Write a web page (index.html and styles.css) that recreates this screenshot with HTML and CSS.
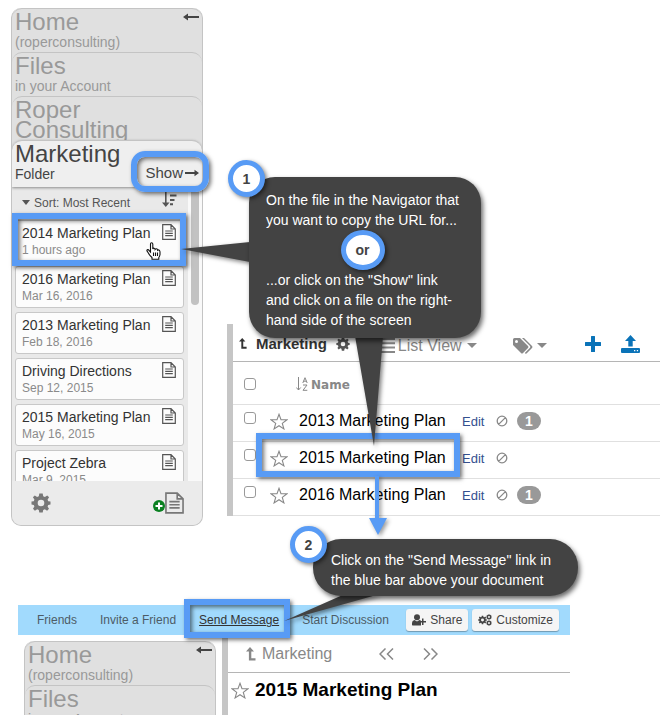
FILE: index.html
```html
<!DOCTYPE html>
<html lang="en">
<head>
<meta charset="utf-8">
<title>Copy a file URL and send a message</title>
<link rel="stylesheet" href="styles.css">
</head>
<body>
<svg class="defs" aria-hidden="true">
  <symbol id="i-back" viewBox="0 0 16 8"><path d="M0 4 5 .4V3H16V5H5V7.600Z"/></symbol>
  <symbol id="i-next" viewBox="0 0 14 8"><path d="M14 4 9.500.8V3H0V5H9.500V7.200Z"/></symbol>
  <symbol id="i-doc" viewBox="0 0 14 16"><path fill="none" stroke="currentColor" stroke-width="1.200" d="M.7.700H9L13.300 5V15.300H.7ZM9 .7V5H13.300M3.200 7H10.800M3.200 9.300H10.800M3.200 11.600H10.800"/></symbol>
  <symbol id="i-gear" viewBox="0 0 20 20"><path fill-rule="evenodd" d="M8.300.5H11.700L12.200 3.300 13.900 4 16.200 2.400 18.100 4.300 16.600 6.600 17.200 8.200 19.500 8.600V11.400L17.200 11.900 16.600 13.500 18 15.800 16.100 17.700 13.800 16.200 12.200 16.900 11.700 19.500H8.300L7.800 16.900 6.200 16.200 3.900 17.700 2 15.800 3.400 13.500 2.800 11.900.5 11.400V8.600L2.800 8.200 3.400 6.600 1.900 4.300 3.800 2.400 6.100 4 7.800 3.300ZM10 6.700A3.300 3.300 0 1 0 10 13.300 3.300 3.300 0 1 0 10 6.700Z"/></symbol>
  <symbol id="i-up" viewBox="0 0 10 14"><path d="M4 0 8 4.600H5.300V11.200H9.500V13.500H2.900V4.600H0Z"/></symbol>
  <symbol id="i-star" viewBox="0 0 18 17"><path fill="none" stroke="currentColor" stroke-width="1.100" stroke-linejoin="miter" d="M9 1.300 11 6.600 16.900 6.800 12.300 10.400 13.900 15.900 9 12.700 4.100 15.900 5.700 10.400 1.100 6.800 7 6.600Z"/></symbol>
  <symbol id="i-none" viewBox="0 0 12 12"><path fill="none" stroke="currentColor" stroke-width="1.300" d="M6 1.200A4.800 4.800 0 1 0 6 10.800 4.800 4.800 0 1 0 6 1.200ZM2.600 9.400 9.400 2.600"/></symbol>
</svg>

<main class="page">
  <section class="browse">
    <nav class="navigator" aria-label="Navigator">
      <div class="tab"><h2>Home</h2><p>(roperconsulting)</p>
        <button class="back" aria-label="Hide navigator"><svg width="16" height="8"><use href="#i-back"/></svg></button></div>
      <div class="tab"><h2>Files</h2><p>in your Account</p></div>
      <div class="tab"><h2>Roper Consulting</h2></div>
      <div class="tab current"><h2>Marketing</h2><p>Folder</p>
        <a class="show" href="#show">Show <svg width="14" height="8"><use href="#i-next"/></svg></a></div>
      <div class="scroller">
        <div class="list">
          <button class="sort"><span class="caret"></span>Sort: Most Recent
            <svg class="sort-icon" width="16" height="17" viewBox="0 0 16 17"><path d="M3 0H4.600V12.500H7.500L3.800 17 0 12.500H3ZM8 0H16V2H8ZM8 4.500H14.500V6.500H8ZM8 9H12.500V11H8ZM8 13.200H11V15.200H8Z"/></svg></button>
          <a class="card" href="#f1"><span class="info"><b>2014 Marketing Plan</b><small>1 hours ago</small></span><svg width="14" height="16"><use href="#i-doc"/></svg></a>
          <a class="card" href="#f2"><span class="info"><b>2016 Marketing Plan</b><small>Mar 16, 2016</small></span><svg width="14" height="16"><use href="#i-doc"/></svg></a>
          <a class="card" href="#f3"><span class="info"><b>2013 Marketing Plan</b><small>Feb 18, 2016</small></span><svg width="14" height="16"><use href="#i-doc"/></svg></a>
          <a class="card" href="#f4"><span class="info"><b>Driving Directions</b><small>Sep 12, 2015</small></span><svg width="14" height="16"><use href="#i-doc"/></svg></a>
          <a class="card" href="#f5"><span class="info"><b>2015 Marketing Plan</b><small>May 16, 2015</small></span><svg width="14" height="16"><use href="#i-doc"/></svg></a>
          <a class="card" href="#f6"><span class="info"><b>Project Zebra</b><small>Mar 9, 2015</small></span><svg width="14" height="16"><use href="#i-doc"/></svg></a>
        </div>
        <div class="track"><div class="thumb"></div></div>
      </div>
      <div class="nav-foot">
        <button aria-label="Settings"><svg width="20" height="20"><use href="#i-gear"/></svg></button>
        <button class="add" aria-label="New document"><svg class="plus" width="12" height="12" viewBox="0 0 12 12"><circle cx="6" cy="6" r="6" fill="#0a8021"/><path d="M5 2.500H7V5H9.500V7H7V9.500H5V7H2.500V5H5Z" fill="#fff"/></svg><svg width="19" height="22"><use href="#i-doc"/></svg></button>
      </div>
    </nav>

    <section class="files">
      <header class="toolbar">
        <svg class="up" width="8" height="13"><use href="#i-up"/></svg>
        <h1>Marketing</h1>
        <button class="gear" aria-label="Folder settings"><svg width="14" height="14"><use href="#i-gear"/></svg></button>
        <button class="view"><svg width="16" height="15" viewBox="0 0 16 15"><path d="M0 0H16V2H0ZM0 4.300H16V6.300H0ZM0 8.600H16V10.600H0ZM0 12.900H16V14.900H0Z"/></svg>List View<span class="caret"></span></button>
        <button class="tags" aria-label="Tags"><svg width="20" height="16" viewBox="0 0 20 16"><path fill-rule="evenodd" d="M0 1.500Q0 0 1.500 0H7L15 8Q16 9 15 10L10 15Q9 16 8 15L0 7ZM3.500 2A1.500 1.500 0 1 0 3.500 5 1.500 1.500 0 1 0 3.500 2ZM9 0H11L19 8Q20 9 19 10L13.500 15.500Q12.500 16 11.800 15L17 9.800Q17.800 9 17 8Z"/></svg><span class="caret"></span></button>
        <button class="new" aria-label="Add"><svg width="16" height="16" viewBox="0 0 16 16"><path d="M6.500 0H9.500Q10 0 10 .5V6H15.500Q16 6 16 6.500V9.500Q16 10 15.500 10H10V15.500Q10 16 9.500 16H6.500Q6 16 6 15.500V10H.5Q0 10 0 9.500V6.500Q0 6 .5 6H6V.5Q6 0 6.500 0Z"/></svg></button>
        <button class="upload" aria-label="Upload"><svg width="19" height="18" viewBox="0 0 19 18"><path fill-rule="evenodd" d="M9.500 0 15 6H11.700V11.500H7.300V6H4ZM1 13H18Q19 13 19 14V17Q19 18 18 18H1Q0 18 0 17V14Q0 13 1 13ZM13 15V16.200H14.300V15ZM15.800 15V16.200H17.100V15Z"/></svg></button>
      </header>
      <table>
        <thead>
          <tr><th class="c-check"><input type="checkbox" aria-label="Select all"></th><th class="c-star"></th>
          <th class="c-name" colspan="2"><div class="sort-name"><svg width="12" height="14" viewBox="0 0 12 14"><path fill="none" stroke="currentColor" d="M2.500 0V13M.3 10.500 2.500 13 4.700 10.500M6.800 6 9 .7 11.200 6M7.600 4.200H10.400M7 8H11L7 13.300H11.300"/></svg>Name</div></th></tr>
        </thead>
        <tbody>
          <tr><td class="c-check"><input type="checkbox" aria-label="Select 2013 Marketing Plan"></td><td class="c-star"><svg width="18" height="17"><use href="#i-star"/></svg></td><td class="c-file">2013 Marketing Plan</td><td><div class="acts"><a href="#e1">Edit</a><svg width="12" height="12"><use href="#i-none"/></svg><span class="badge">1</span></div></td></tr>
          <tr><td class="c-check"><input type="checkbox" aria-label="Select 2015 Marketing Plan"></td><td class="c-star"><svg width="18" height="17"><use href="#i-star"/></svg></td><td class="c-file">2015 Marketing Plan</td><td><div class="acts"><a href="#e2">Edit</a><svg width="12" height="12"><use href="#i-none"/></svg></div></td></tr>
          <tr><td class="c-check"><input type="checkbox" aria-label="Select 2016 Marketing Plan"></td><td class="c-star"><svg width="18" height="17"><use href="#i-star"/></svg></td><td class="c-file">2016 Marketing Plan</td><td><div class="acts"><a href="#e3">Edit</a><svg width="12" height="12"><use href="#i-none"/></svg><span class="badge">1</span></div></td></tr>
        </tbody>
      </table>
    </section>
  </section>

  <section class="document">
    <nav class="bluebar" aria-label="Document actions">
      <a href="#friends">Friends</a>
      <a href="#invite">Invite a Friend</a>
      <a class="send" href="#send">Send Message</a>
      <a href="#discuss">Start Discussion</a>
      <button class="share"><svg width="14" height="12" viewBox="0 0 14 12" fill="#777"><circle cx="5" cy="3.200" r="3"/><path d="M0 11V9Q0 6.500 2.500 6L5 7.500 7.500 6Q8.500 6.200 9 7V11.500H.5ZM10 4.500H11.500V7H14V8.500H11.500V11H10V8.500H8V7H10Z"/></svg>Share</button>
      <button class="custom"><svg width="14" height="12" viewBox="0 0 14 12" fill="#444"><svg y="1" width="9" height="10"><use href="#i-gear"/></svg><svg x="8" width="6" height="6"><use href="#i-gear"/></svg><svg x="8" y="6" width="6" height="6"><use href="#i-gear"/></svg></svg>Customize</button>
    </nav>
    <div class="doc-body">
      <div class="navigator">
        <div class="tab"><h2>Home</h2><p>(roperconsulting)</p>
          <button class="back" aria-label="Hide navigator"><svg width="16" height="8"><use href="#i-back"/></svg></button></div>
        <div class="tab"><h2>Files</h2><p>in your Account</p></div>
      </div>
      <article class="doc">
        <header class="crumbs"><svg width="10" height="14"><use href="#i-up"/></svg><span>Marketing</span>
          <button class="prev" aria-label="Previous"><svg width="15" height="12" viewBox="0 0 15 12"><path d="M6.500.5 1 6 6.500 11.500M14 .5 8.500 6 14 11.500"/></svg></button>
          <button class="following" aria-label="Next"><svg width="15" height="12" viewBox="0 0 15 12"><path d="M1 .5 6.500 6 1 11.500M8.500.5 14 6 8.500 11.500"/></svg></button></header>
        <h1><svg width="18" height="17"><use href="#i-star"/></svg>2015 Marketing Plan</h1>
      </article>
    </div>
  </section>

  <div class="frame show-frame"></div>
  <div class="frame card-frame"></div>
  <div class="frame row-frame"></div>
  <div class="frame send-frame"></div>
  <svg class="pointers" width="660" height="725" aria-hidden="true">
    <path fill="#434343" d="M181 249 250 242V262ZM355 336H383L374 446ZM284 621 345 594H380Q330 608 284 621Z"/>
  </svg>
  <svg class="arrow" width="20" height="60" viewBox="0 0 20 60" aria-hidden="true"><path fill="#589bf5" d="M7 0H11V42H19L10 59 1 42H7Z"/></svg>
  <svg class="hand" width="15" height="18" viewBox="0 0 15 18" aria-hidden="true"><path fill="#fff" stroke="#111" stroke-width="1.100" d="M4.500 10V2Q4.500.7 5.600.7T6.800 2V7Q7.200 5.900 8.200 6.200 9 6.300 9.100 7.500 10 6.400 11 7 11.600 7.400 11.600 8.200 12.600 7.600 13.400 8.300 14 8.900 14 10V12.500Q13.800 14.300 12.800 15.500V17.300H6V15.500Q3.500 13.300 2.500 11.200L.9 8.800Q.9 7.200 2.500 7.800ZM7.500 10.500V14M9.500 10.500V14M11.500 10.500V14"/></svg>

  <aside class="callout first">
    <span class="dot step">1</span>
    <p>On the file in the Navigator that<br>you want to copy the URL for...</p>
    <span class="dot or">or</span>
    <p>...or click on the "Show" link<br>and click on a file on the right-<br>hand side of the screen</p>
  </aside>
  <aside class="callout second">
    <span class="dot step">2</span>
    <p>Click on the "Send Message" link in<br>the blue bar above your document</p>
  </aside>
</main>
</body>
</html>
```
FILE: styles.css
```css
* { box-sizing: border-box; }

body {
  margin: 0;
  background: #fff;
  color: #333;
  font-family: "Liberation Sans", Arial, sans-serif;
  font-size: 14px;
}

h1, h2, p { margin: 0; font-weight: normal; }
a { color: inherit; text-decoration: none; }
svg { display: block; flex: none; fill: currentColor; }
button {
  display: flex;
  align-items: center;
  padding: 0;
  border: 0;
  background: none;
  color: inherit;
  font: inherit;
}
.defs { position: absolute; width: 0; height: 0; }
.page { position: relative; overflow: hidden; }

.browse {
  display: flex;
  align-items: flex-end;
  gap: 24px;
  padding: 8px 0 0 11px;
}

/* Navigator */
.navigator {
  isolation: isolate;
  flex: none;
  width: 192px;
  overflow: hidden;
  border: 1px solid #c4c4c4;
  border-top: 0;
  border-radius: 10px;
  background: #e0e0e0;
}
.tab {
  position: relative;
  height: 44px;
  padding: 3px 3px 0;
  overflow: hidden;
  border-top: 1px solid #c4c4c4;
  border-radius: 10px 10px 0 0;
  background: #e0e0e0;
  color: #999;
}
.tab h2 { font-size: 24px; line-height: 20px; }
.tab p { line-height: 20px; }
.tab.current {
  z-index: 1;
  height: 47px;
  background: #efefef;
  color: #444;
  box-shadow: 0 1px 3px rgba(0, 0, 0, .4);
}
.back { position: absolute; top: 4px; right: 3px; color: #444; }
.show {
  position: absolute;
  right: 3px;
  bottom: 6px;
  display: flex;
  align-items: center;
  gap: 2px;
  font-size: 15px;
  line-height: 16px;
}

.scroller { display: flex; height: 294px; overflow: hidden; }
.list {
  display: flex;
  flex: 1;
  flex-direction: column;
  gap: 4px;
  padding: 0 4px 0 3px;
  background: #e9e9e9;
}
.sort {
  flex: none;
  gap: 4px;
  height: 29px;
  padding: 2px 6px 0 7px;
  color: #555;
  font-size: 12px;
}
.sort-icon { margin: -8px 0 0 auto; }
.caret {
  border: 4px solid transparent;
  border-top: 5px solid currentColor;
  border-bottom: 0;
}
.card {
  display: flex;
  flex: none;
  justify-content: space-between;
  height: 42px;
  padding: 3px 7px 0 6px;
  border: 1px solid #c8c8c8;
  border-radius: 3px;
  background: #fcfcfc;
}
.card b, .card small {
  display: block;
  font-size: 14px;
  font-weight: normal;
  line-height: 18px;
}
.card small { color: #8a8a8a; font-size: 12px; line-height: 16px; }
.card svg { color: #555; }
.track { width: 14px; padding-left: 3px; background: #f9f9f9; }
.thumb {
  width: 8px;
  height: 118px;
  border-radius: 0 0 4px 4px;
  background: #c2c2c2;
}
.nav-foot {
  display: flex;
  align-items: center;
  justify-content: space-between;
  height: 44px;
  padding: 0 18px 0 19px;
  background: #ebebeb;
  color: #777;
}
.plus { margin-top: 6px; }

/* File list */
.files {
  flex: 1;
  margin-bottom: 10px;
  border-left: 6px solid #c6c6c6;
}
.toolbar {
  display: flex;
  align-items: center;
  height: 38px;
  padding: 3px 20px 0 6px;
  border-bottom: 1px solid #b5b5b5;
  color: #333;
}
.toolbar h1 { margin: 0 9px; font-size: 15px; font-weight: bold; }
.gear { color: #555; }
.view { gap: 3px; margin: 4px 0 0 29px; color: #888; font-size: 16px; }
.view .caret, .tags .caret { margin-left: 2px; border-width: 5px 5px 0; }
.tags { gap: 2px; margin: 4px 0 0 36px; color: #888; }
.new { margin-left: auto; color: #0a73b8; }
.upload { margin-left: 20px; color: #0a73b8; }

table { width: 100%; border-collapse: collapse; }
th, td { height: 37px; padding: 0; border-bottom: 1px solid #e0e0e0; text-align: left; }
td { padding-bottom: 4px; }
th { height: 43px; padding-top: 2px; color: #888; font: bold 12px/16px "DejaVu Sans", sans-serif; }
.sort-name { display: flex; gap: 3px; margin-left: -3px; padding-top: 2px; }
.c-check { width: 37px; padding-left: 11px; }
.c-star { width: 29px; color: #888; }
td.c-file { width: 163px; color: #000; font-size: 16px; }
input {
  display: block;
  width: 12px;
  height: 12px;
  margin: 0;
  appearance: none;
  border: 1px solid #999;
  border-radius: 3px;
  background: #fff;
}
td input { margin-bottom: 6px; }
.acts { display: flex; align-items: center; gap: 9px; color: #888; }
.acts a { width: 25px; color: #34508f; font-size: 13px; }
.badge {
  width: 24px;
  border-radius: 9px;
  background: #999;
  color: #fff;
  font-size: 14px;
  font-weight: bold;
  line-height: 18px;
  text-align: center;
}

/* Document view */
.document { max-width: 570px; height: 110px; margin-top: 79px; overflow: hidden; }
.bluebar {
  display: flex;
  align-items: center;
  height: 30px;
  margin-left: 18px;
  padding: 0 11px 0 19px;
  background: #a1dafd;
  color: #4d5c66;
  font-size: 12px;
}
.bluebar a { margin-right: 23px; white-space: nowrap; }
.bluebar a:last-of-type { margin-right: 0; }
.bluebar .send { color: #333; text-decoration: underline; }
.bluebar button {
  gap: 4px;
  height: 22px;
  padding: 0 6px;
  border-radius: 3px;
  background: #f5f5f5;
  box-shadow: 0 1px 1px rgba(0, 0, 0, .3);
  color: #444;
}
.bluebar .share { margin-left: auto; }
.bluebar .custom { margin-left: 4px; }
.doc-body { display: flex; align-items: flex-start; gap: 6px; padding-left: 24px; }
.doc-body .navigator { margin-top: 6px; }
.doc { flex: 1; height: 80px; border-left: 6px solid #c6c6c6; }
.crumbs {
  display: flex;
  align-items: center;
  height: 38px;
  padding-left: 18px;
  border-bottom: 1px solid #b5b5b5;
  color: #888;
  font-size: 16px;
}
.crumbs span { margin-left: 6px; }
.crumbs button path { fill: none; stroke: currentColor; stroke-width: 1.500; }
.prev { margin-left: 47px; }
.following { margin-left: 29px; }
.doc h1 {
  display: flex;
  align-items: center;
  gap: 6px;
  padding: 6px 0 0 3px;
  color: #000;
  font-size: 19px;
  font-weight: bold;
  line-height: 22px;
}
.doc h1 svg { color: #888; }

/* Annotations laid over the two views */
.pointers { position: absolute; top: 0; left: 0; filter: drop-shadow(2px 2px 2px rgba(0, 0, 0, .5)); }
.frame {
  position: absolute;
  border: 6px solid #589bf5;
  box-shadow: 2px 2px 4px rgba(0, 0, 0, .55), inset 2px 2px 4px rgba(0, 0, 0, .55);
}
.show-frame { top: 151px; left: 131px; width: 78px; height: 41px; border-radius: 14px; }
.card-frame { top: 213px; left: 12px; width: 174px; height: 53px; }
.row-frame { top: 433px; left: 256px; width: 204px; height: 44px; }
.send-frame { top: 599px; left: 184px; width: 106px; height: 39px; }
.arrow { position: absolute; top: 476px; left: 368px; filter: drop-shadow(2px 2px 2px rgba(0, 0, 0, .4)); }
.hand { position: absolute; top: 242px; left: 146px; }

.callout {
  position: absolute;
  background: #434343;
  box-shadow: 2px 3px 5px rgba(0, 0, 0, .6);
  color: #fff;
  line-height: 20px;
  white-space: nowrap;
}
.first { top: 177px; left: 249px; padding: 13px 22px 8px 17px; border-radius: 26px; }
.second { top: 539px; left: 313px; padding: 11px 27px 6px 18px; border-radius: 28px; }
.dot {
  display: grid;
  place-items: center;
  width: 37px;
  height: 37px;
  border: 5px solid #589bf5;
  border-radius: 50%;
  background: #fff;
  box-shadow: 2px 2px 4px rgba(0, 0, 0, .5);
  color: #434343;
  font-weight: bold;
}
.step { position: absolute; top: -17px; left: -21px; }
.second .step { top: -13px; left: -23px; }
.or { width: 44px; height: 40px; margin: 0 auto; }
```
